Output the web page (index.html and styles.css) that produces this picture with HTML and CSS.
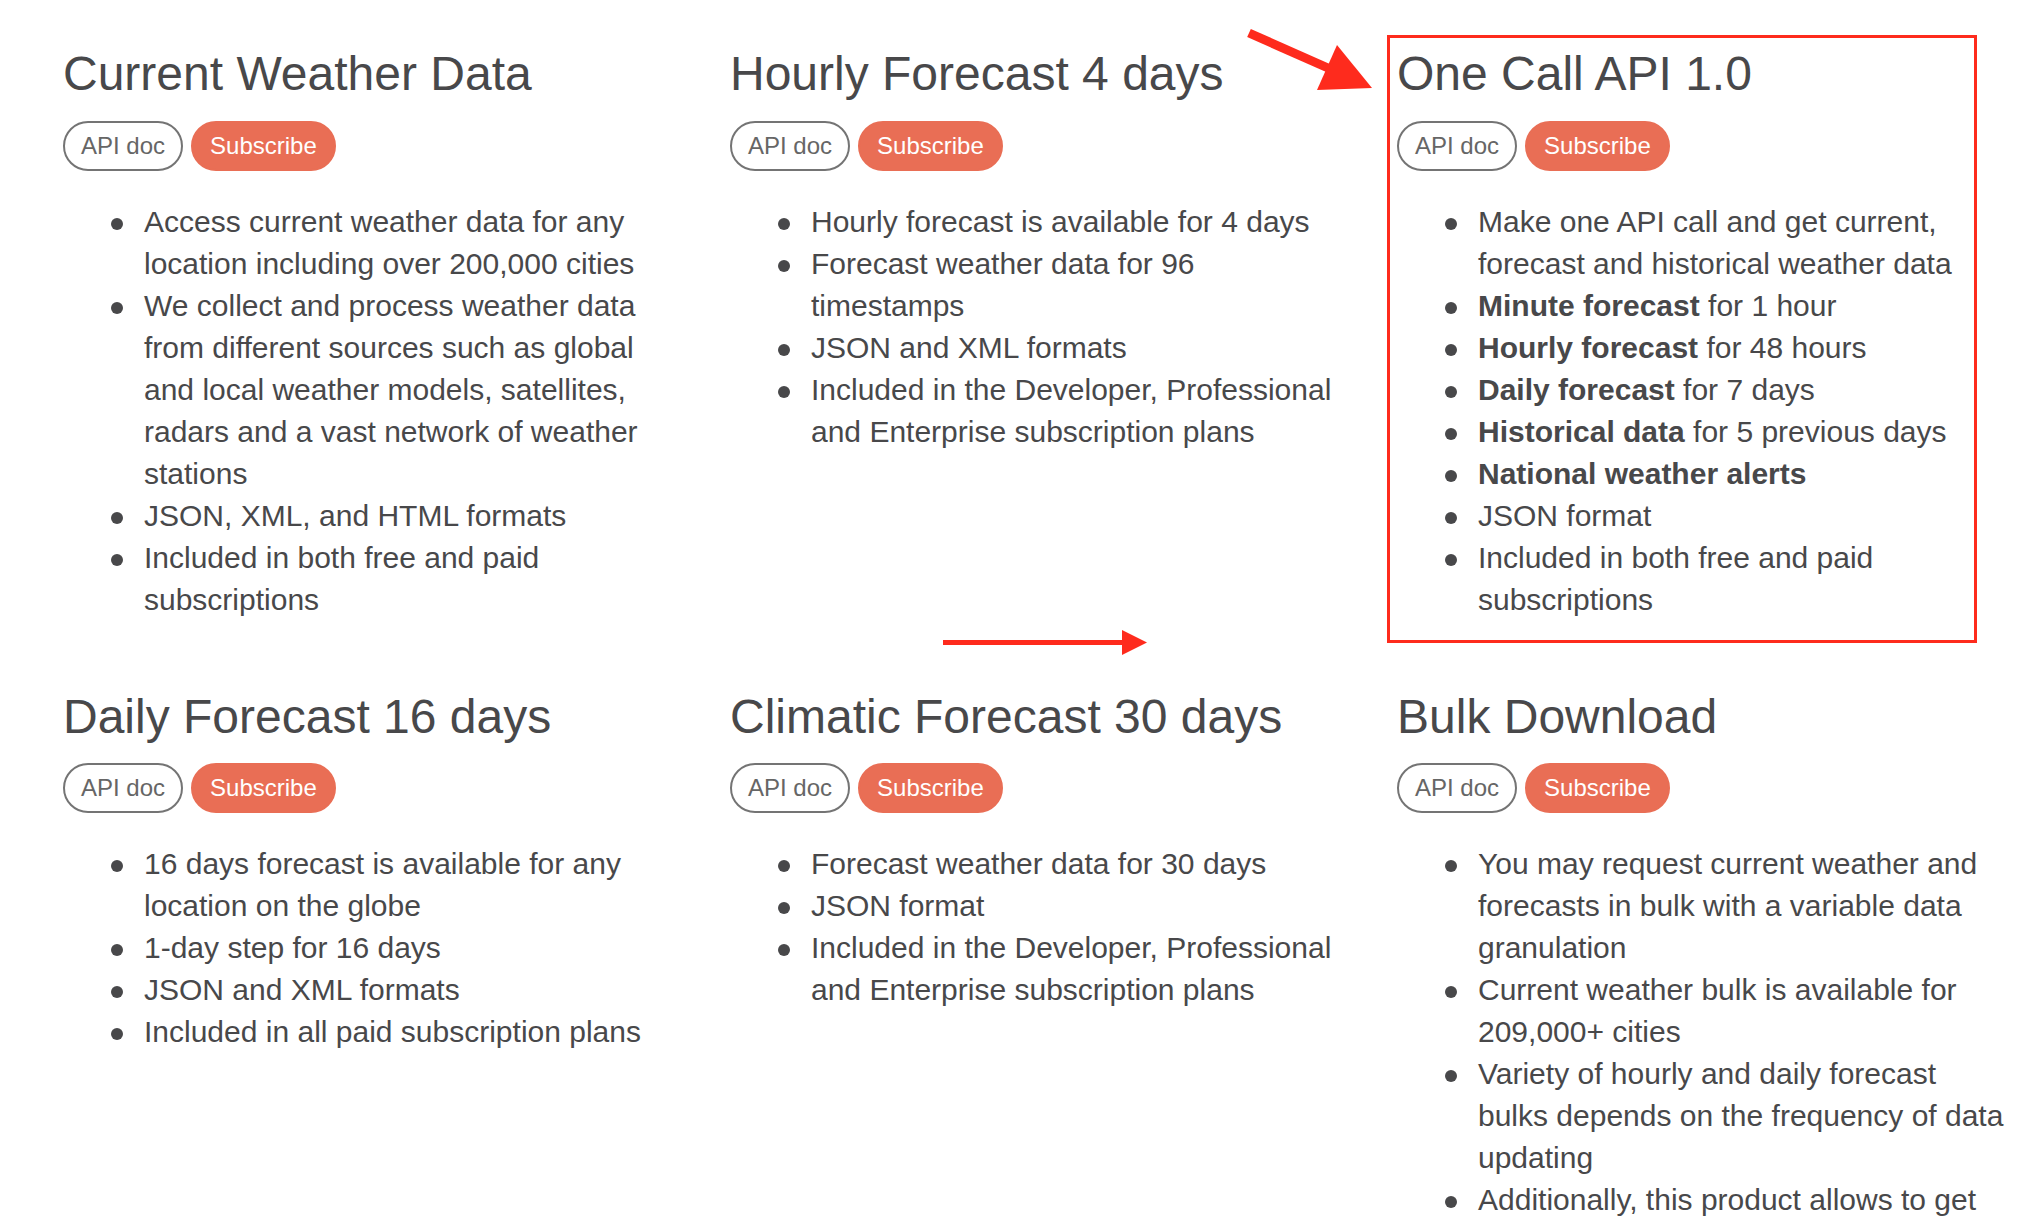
FILE: index.html
```html
<!DOCTYPE html>
<html lang="en">
<head>
<meta charset="utf-8">
<title>Weather APIs</title>
<link rel="stylesheet" href="styles.css">
</head>
<body>
<div class="page">
  <main class="grid">
    <section class="product">
      <h2 class="title">Current Weather Data</h2>
      <div class="actions"><a class="btn btn-doc">API doc</a><a class="btn btn-sub">Subscribe</a></div>
      <ul class="features">
        <li>Access current weather data for any location including over 200,000 cities</li>
        <li>We collect and process weather data from different sources such as global and local weather models, satellites, radars and a vast network of weather stations</li>
        <li>JSON, XML, and HTML formats</li>
        <li>Included in both free and paid subscriptions</li>
      </ul>
    </section>
    <section class="product">
      <h2 class="title">Hourly Forecast 4 days</h2>
      <div class="actions"><a class="btn btn-doc">API doc</a><a class="btn btn-sub">Subscribe</a></div>
      <ul class="features">
        <li>Hourly forecast is available for 4 days</li>
        <li>Forecast weather data for 96 timestamps</li>
        <li>JSON and XML formats</li>
        <li>Included in the Developer, Professional and Enterprise subscription plans</li>
      </ul>
    </section>
    <section class="product">
      <h2 class="title">One Call API 1.0</h2>
      <div class="actions"><a class="btn btn-doc">API doc</a><a class="btn btn-sub">Subscribe</a></div>
      <ul class="features">
        <li>Make one API call and get current, forecast and historical weather data</li>
        <li><b>Minute forecast</b> for 1 hour</li>
        <li><b>Hourly forecast</b> for 48 hours</li>
        <li><b>Daily forecast</b> for 7 days</li>
        <li><b>Historical data</b> for 5 previous days</li>
        <li><b>National weather alerts</b></li>
        <li>JSON format</li>
        <li>Included in both free and paid subscriptions</li>
      </ul>
    </section>
    <section class="product">
      <h2 class="title">Daily Forecast 16 days</h2>
      <div class="actions"><a class="btn btn-doc">API doc</a><a class="btn btn-sub">Subscribe</a></div>
      <ul class="features">
        <li>16 days forecast is available for any location on the globe</li>
        <li>1-day step for 16 days</li>
        <li>JSON and XML formats</li>
        <li>Included in all paid subscription plans</li>
      </ul>
    </section>
    <section class="product">
      <h2 class="title">Climatic Forecast 30 days</h2>
      <div class="actions"><a class="btn btn-doc">API doc</a><a class="btn btn-sub">Subscribe</a></div>
      <ul class="features">
        <li>Forecast weather data for 30 days</li>
        <li>JSON format</li>
        <li>Included in the Developer, Professional and Enterprise subscription plans</li>
      </ul>
    </section>
    <section class="product">
      <h2 class="title">Bulk Download</h2>
      <div class="actions"><a class="btn btn-doc">API doc</a><a class="btn btn-sub">Subscribe</a></div>
      <ul class="features">
        <li>You may request current weather and forecasts in bulk with a variable data granulation</li>
        <li>Current weather bulk is available for 209,000+ cities</li>
        <li>Variety of hourly and daily forecast bulks depends on the frequency of data updating</li>
        <li>Additionally, this product allows to get</li>
      </ul>
    </section>
  </main>
  <svg class="annotations" width="2030" height="1226" viewBox="0 0 2030 1226" aria-hidden="true">
    <line x1="1249" y1="33" x2="1328" y2="68" stroke="#fe2b1d" stroke-width="9"/>
    <polygon points="1337,45 1317,90 1372,88" fill="#fe2b1d"/>
    <line x1="943" y1="642.5" x2="1124" y2="642.5" stroke="#fe2b1d" stroke-width="5"/>
    <polygon points="1122,630 1122,655 1147,642.5" fill="#fe2b1d"/>
    <rect x="1388.5" y="36.5" width="587" height="605" fill="none" stroke="#fe2b1d" stroke-width="3"/>
  </svg>
</div>
</body>
</html>
```

FILE: styles.css
```css
html, body {
  margin: 0;
  padding: 0;
  background: #ffffff;
}

body {
  width: 2030px;
  height: 1226px;
  overflow: hidden;
  font-family: "Liberation Sans", Arial, Helvetica, sans-serif;
  color: #48484a;
}

.page {
  position: relative;
  width: 2030px;
  height: 1226px;
}

.grid {
  display: grid;
  grid-template-columns: 613px 613px 613px;
  column-gap: 54px;
  row-gap: 67px;
  align-items: start;
  padding: 45px 0 0 63px;
}

.title {
  margin: 0;
  font-size: 48px;
  line-height: 57.6px;
  font-weight: 400;
  color: #48484a;
  white-space: nowrap;
}

.actions {
  display: flex;
  gap: 8px;
  margin-top: 18px;
}

.btn {
  display: inline-flex;
  align-items: center;
  box-sizing: border-box;
  height: 50px;
  padding: 0 16px;
  border-radius: 25px;
  border: 2px solid #747474;
  font-size: 24px;
  line-height: 1;
  text-decoration: none;
}

.btn-doc {
  color: #666666;
  background: #ffffff;
}

.btn-sub {
  padding: 0 17px;
  color: #ffffff;
  background: #e96e55;
  border-color: #e96e55;
}

.features {
  list-style: none;
  margin: 30px 0 0 0;
  padding: 0 0 0 81px;
  font-size: 30px;
  line-height: 42px;
}

.features li {
  position: relative;
}

.features li::before {
  content: "";
  position: absolute;
  left: -33px;
  top: 17px;
  width: 12px;
  height: 12px;
  border-radius: 50%;
  background: #48484a;
}

.features b {
  font-weight: 700;
}

.annotations {
  position: absolute;
  top: 0;
  left: 0;
  pointer-events: none;
}
```
